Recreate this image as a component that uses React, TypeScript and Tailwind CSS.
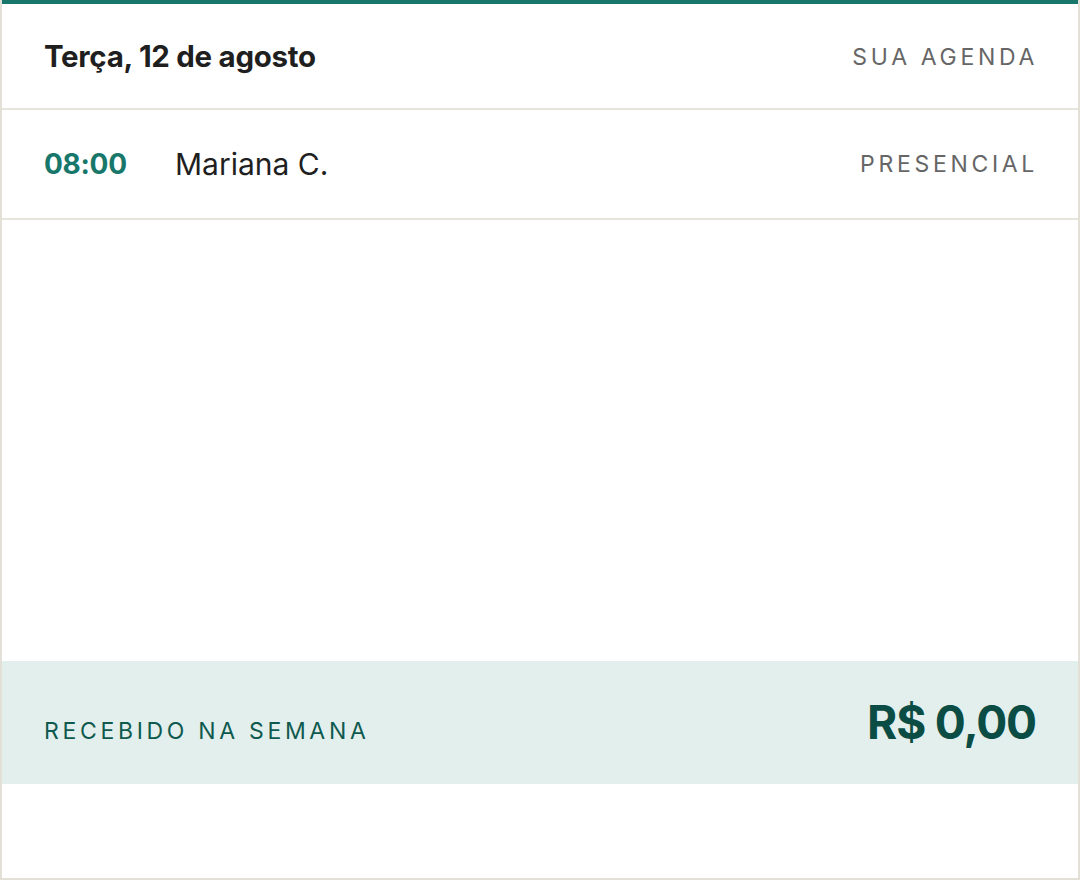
export default function App() {
  return (
    <div
      className="w-[1080px] h-[880px] bg-white border-x-2 border-b-2 border-[#e2e0d7] flex flex-col"
      style={{ fontFamily: 'Inter, "Liberation Sans", sans-serif' }}
    >
      <div className="h-[4px] bg-[#17776a] shrink-0" />
      <div className="h-[106px] shrink-0 flex items-center justify-between pl-[42px] pr-[42px] border-b-2 border-[#e6e4dc]">
        <span className="text-[29.5px] font-bold tracking-[-0.01em] text-[#1f1f1f]">Terça, 12 de agosto</span>
        <span className="text-[23px] tracking-[0.16em] mr-[-2px] text-[#666666] mt-[3px]">SUA AGENDA</span>
      </div>
      <div className="h-[110px] shrink-0 flex items-center pl-[42px] pr-[42px] border-b-2 border-[#e6e4dc]">
        <span className="w-[131px] text-[28px] font-bold text-[#17776a] tracking-[-0.01em]">08:00</span>
        <span className="flex-1 text-[30px] text-[#1f1f1f]">Mariana C.</span>
        <span className="text-[23px] tracking-[0.16em] mr-[-2px] text-[#666666]">PRESENCIAL</span>
      </div>
      <div className="flex-1" />
      <div className="h-[123px] shrink-0 bg-[#e3efec] flex items-center pl-[42px] pr-[42px]">
        <div className="flex items-baseline justify-between w-full">
          <span className="text-[23px] tracking-[0.16em] text-[#0f5a4f]">RECEBIDO NA SEMANA</span>
          <span className="text-[46px] font-bold tracking-[-0.025em] text-[#0b4d44]">R$ 0,00</span>
        </div>
      </div>
      <div className="h-[94px] shrink-0" />
    </div>
  );
}
